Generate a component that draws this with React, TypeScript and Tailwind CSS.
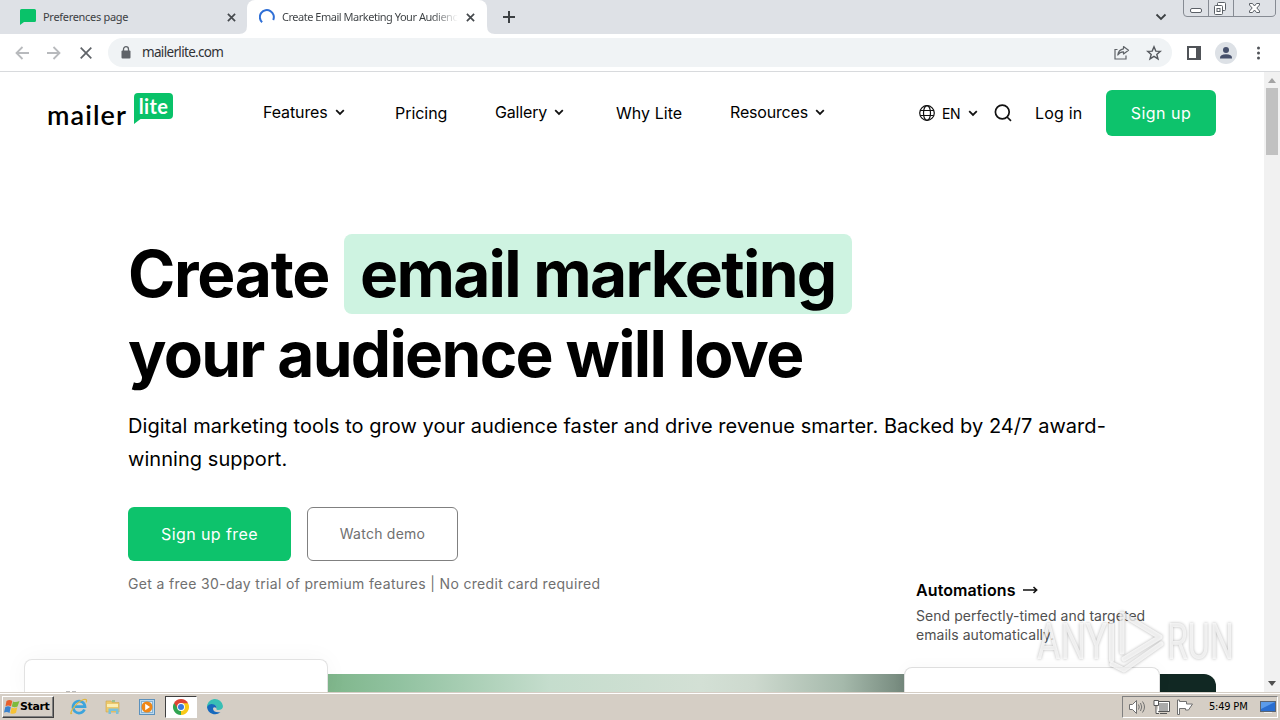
import type { ReactNode } from "react";

const navItems = [
   { label: "Features", menu: true, box: "w-[132px]", text: "tracking-[-0.12px]" },
   { label: "Pricing", menu: false, box: "w-[100px]", text: "tracking-[-0.05px]" },
   { label: "Gallery", menu: true, box: "w-[121px]", text: "tracking-[-0.15px]" },
   { label: "Why Lite", menu: false, box: "w-[114px]", text: "tracking-[0.05px]" },
   { label: "Resources", menu: true, box: "w-[189px]", text: "tracking-[-0.18px]" },
];

function Chevron() {
   return (
      <svg width="10" height="7" viewBox="0 0 10 7" fill="none" stroke="#111" strokeWidth="1.8">
         <path d="M1.2 1.2 5 4.9 8.8 1.2" />
      </svg>
   );
}

function CloseIcon({ size, color }: { size: number; color: string }) {
   return (
      <svg width={size} height={size} viewBox="0 0 10 10" stroke={color} strokeWidth="1.9">
         <path d="M1 1 9 9M9 1 1 9" />
      </svg>
   );
}

function TabStrip() {
   return (
      <div className="relative flex h-[34px] shrink-0 bg-[#dee1e6] text-[#3c4043]">
         <div className="flex w-[247px] items-center pl-5 pr-[11px]">
            <svg width="16" height="16" viewBox="0 0 16 16">
               <path d="M1.5 0H14.5Q16 0 16 1.5V11.5Q16 13 14.5 13H4L0 16V1.5Q0 0 1.5 0Z" fill="#09c269" />
            </svg>
            <span className="ml-[7px] grow whitespace-nowrap font-['Noto_Sans',sans-serif] text-[11px] tracking-[-0.3px]">
               Preferences page
            </span>
            <CloseIcon size={9} color="#45494d" />
         </div>
         <div className="relative flex h-full w-[240px] items-center rounded-t-lg bg-white pl-[12px] pr-[12px]">
            <svg className="absolute -left-2 bottom-0" width="8" height="8" viewBox="0 0 8 8">
               <path d="M8 0V8H0Q8 8 8 0Z" fill="#fff" />
            </svg>
            <svg className="absolute -right-2 bottom-0" width="8" height="8" viewBox="0 0 8 8">
               <path d="M0 0V8H8Q0 8 0 0Z" fill="#fff" />
            </svg>
            <svg width="16" height="16" viewBox="0 0 16 16" fill="none" stroke="#2f6fd6" strokeWidth="2">
               <path d="M3.1 13.2A7 7 0 1 1 14.2 11" />
            </svg>
            <span className="ml-[7px] w-[176px] overflow-hidden whitespace-nowrap bg-gradient-to-r from-[#3c4043] from-85% to-transparent bg-clip-text font-['Noto_Sans',sans-serif] text-[11px] tracking-[-0.48px] text-transparent">
               Create Email Marketing Your Audience
            </span>
            <span className="ml-auto">
               <CloseIcon size={9} color="#45494d" />
            </span>
         </div>
         <svg className="mt-[11px] ml-[16px]" width="12" height="12" viewBox="0 0 12 12" stroke="#3c4043" strokeWidth="2">
            <path d="M6 0V12M0 6H12" />
         </svg>
         <svg className="ml-auto mt-[13px] mr-[16px]" width="12" height="8" viewBox="0 0 12 8" fill="none" stroke="#3c4043" strokeWidth="1.8">
            <path d="M1.5 1.5 6 6 10.5 1.5" />
         </svg>
         <svg width="97" height="18" viewBox="0 0 97 18" fill="none">
            <path d="M.5 0V13Q.5 16.5 4 16.5H88Q92.5 16.5 92.5 13V0M25.5 0V16M50.5 0V16" stroke="#868b93" />
            <g stroke="#5b6067" fill="#fff">
               <rect x="7.500" y="8.500" width="11" height="4" rx="1.500" />
               <rect x="34.500" y="2.500" width="8" height="8" rx="1" />
               <rect x="31.500" y="5.500" width="8" height="9" rx="1" />
               <rect x="34" y="8.500" width="3" height="3" />
               <path d="M66.500 3.500H69.500L71.500 6 73.500 3.500H76.500V5L73.800 8 76.500 11V12.500H73.500L71.500 10 69.500 12.500H66.500V11L69.200 8 66.500 5Z" />
            </g>
         </svg>
      </div>
   );
}

function Toolbar() {
   return (
      <div className="flex h-[38px] shrink-0 items-center border-b border-[#d8dadd] bg-white pl-[15px]">
         <svg width="14" height="14" viewBox="0 0 14 14" fill="none" stroke="#b8babd" strokeWidth="1.8">
            <path d="M14 7H1.500M7.500 1 1.500 7 7.500 13" />
         </svg>
         <svg className="ml-[18px]" width="14" height="14" viewBox="0 0 14 14" fill="none" stroke="#b8babd" strokeWidth="1.8">
            <path d="M0 7H12.500M6.500 1 12.500 7 6.500 13" />
         </svg>
         <svg className="ml-[19px]" width="12" height="12" viewBox="0 0 12 12" stroke="#5f6368" strokeWidth="1.7">
            <path d="M.7.7 11.300 11.300M11.300.7.7 11.300" />
         </svg>
         <div className="ml-[16px] flex h-[29px] w-[1064px] items-center rounded-full bg-[#f0f3f5] pl-[13px] pr-[10px]">
            <svg width="10" height="13" viewBox="0 0 10 13">
               <rect x="0.500" y="4.500" width="9" height="8" rx="1" fill="#5f6368" />
               <path d="M2.500 5V3.200a2.500 2.500 0 0 1 5 0V5" fill="none" stroke="#5f6368" strokeWidth="1.300" />
            </svg>
            <span className="ml-[11px] grow font-['Noto_Sans',sans-serif] text-[13.5px] tracking-[-0.67px] text-[#303236]">
               mailerlite.com
            </span>
            <svg width="16" height="15" viewBox="0 0 16 15" fill="none" stroke="#5f6368" strokeWidth="1.2">
               <path d="M3.500 4.500H1V14H12V10.500" />
               <path d="M9.500 1.500 14.500 5.300 9.500 9V6.800Q6 6.600 3.800 10 4.500 4.600 9.500 3.800Z" strokeLinejoin="round" />
            </svg>
            <svg className="ml-4" width="16" height="16" viewBox="0 0 16 16" fill="none" stroke="#55595e" strokeWidth="1.4">
               <path d="M8 1.800 9.800 6.100 14.300 6.400 10.800 9.400 12 13.900 8 11.400 4 13.900 5.200 9.400 1.700 6.400 6.200 6.100Z" />
            </svg>
         </div>
         <svg className="ml-[15px]" width="14" height="14" viewBox="0 0 14 14">
            <rect x="1" y="1" width="12" height="12" fill="none" stroke="#505358" strokeWidth="2" />
            <rect x="9" y="1" width="5" height="12" fill="#505358" />
         </svg>
         <svg className="ml-[14px]" width="22" height="22" viewBox="0 0 22 22">
            <circle cx="11" cy="11" r="11" fill="#dde1e6" />
            <circle cx="11" cy="8" r="3" fill="#46506b" />
            <path d="M5 16Q5 12.300 11 12.300T17 16V16.500H5Z" fill="#46506b" />
         </svg>
         <svg className="ml-[19px]" width="4" height="14" viewBox="0 0 4 14" fill="#505358">
            <circle cx="2.500" cy="2" r="1.500" />
            <circle cx="2.500" cy="7" r="1.500" />
            <circle cx="2.500" cy="12" r="1.500" />
         </svg>
      </div>
   );
}

function Logo() {
   return (
      <div className="-mt-[2px] flex w-[215px] items-start text-black">
         <span className="-ml-px mt-[5px] w-[87px] font-['Lato',sans-serif] text-[27px] font-semibold leading-[34px] tracking-[1.1px]">
            mailer
         </span>
         <div className="relative h-[32px] w-[39px]">
            <svg className="absolute inset-0" width="39" height="32" viewBox="0 0 39 32">
               <path d="M4 0H35Q39 0 39 4V22Q39 26 35 26H6.500L0 31V4Q0 0 4 0Z" fill="#09c269" />
            </svg>
            <span className="relative block text-center font-['Lato',sans-serif] text-[20px] font-bold leading-[27px] tracking-[0.4px] text-white">
               lite
            </span>
         </div>
      </div>
   );
}

function Header() {
   return (
      <header className="flex h-[82px] shrink-0 items-center px-12 text-[16px] text-black">
         <Logo />
         {navItems.map((item) => (
            <div
               key={item.label}
               className={"flex items-center gap-[7px] whitespace-nowrap " + item.box + (item.menu ? " pb-[2px]" : "")}>
               <span className={item.text}>{item.label}</span>
               {item.menu && <Chevron />}
            </div>
         ))}
         <div className="flex w-[75px] items-center">
            <svg width="16" height="16" viewBox="0 0 16 16" fill="none" stroke="#111" strokeWidth="1.2">
               <circle cx="8" cy="8" r="7.300" />
               <ellipse cx="8" cy="8" rx="3.500" ry="7.300" />
               <path d="M1.300 5.500H14.700M1.300 10.500H14.700" />
            </svg>
            <span className="ml-[7px] mr-[8px] text-[14px] tracking-[-0.4px]">EN</span>
            <Chevron />
         </div>
         <svg className="mr-[23px]" width="18" height="18" viewBox="0 0 18 18" fill="none" stroke="#111" strokeWidth="1.700">
            <circle cx="8.300" cy="8" r="6.900" />
            <path d="M13 13 17 16.800" />
         </svg>
         <span className="w-[71px] tracking-[0.2px]">Log in</span>
         <button className="h-[46px] w-[110px] rounded-[6px] bg-[#0dc36c] tracking-[0.5px] text-white">Sign up</button>
      </header>
   );
}

function Hero() {
   return (
      <section className="h-[520px] pl-[128px] pt-[80px] text-black">
         <h1 className="text-[64px] font-bold leading-[80px] tracking-[-1.7px]">
            <span className="flex">
               <span className="w-[216px] tracking-[-1.28px]">Create</span>
               <span className="w-[508px] whitespace-nowrap rounded-[8px] bg-[#cef3e1] pl-4">email marketing</span>
            </span>
            your audience will love
         </h1>
         <p className="mt-[16px] w-[1010px] text-[20px] leading-[33px] tracking-[0.05px]">
            Digital marketing tools to grow your audience faster and drive revenue smarter. Backed by 24/7 award-
            <br />
            winning support.
         </p>
         <div className="mt-[31px] flex gap-4">
            <button className="h-[54px] w-[163px] rounded-[6px] bg-[#0dc36c] text-[16px] tracking-[0.4px] text-white">Sign up free</button>
            <button className="h-[54px] w-[151px] rounded-[6px] border border-[#808080] pb-[2px] text-[14px] tracking-[0.25px] text-[#707070]">
               Watch demo
            </button>
         </div>
         <p className="mt-[13px] text-[14px] leading-5 tracking-[0.33px] text-[#707070]">
            Get a free 30-day trial of premium features | No credit card required
         </p>
      </section>
   );
}

function Preview() {
   return (
      <div className="relative">
         <div className="absolute left-[328px] top-0 h-[20px] w-[888px] rounded-tr-[12px] bg-[linear-gradient(90deg,#7fb68b_0%,#91c2a0_8%,#c5ddcd_25%,#d3e0d5_42%,#cdd9ce_48%,#a5b9ab_58%,#73877b_65%,#112823_85%,#112823_100%)]" />
         <div className="absolute -top-[15px] left-[24px] h-[36px] w-[304px] rounded-t-[8px] border border-b-0 border-[#e2e2e2] bg-white shadow-[0_0_24px_rgba(0,0,0,0.04)]">
            <span className="absolute left-[41px] top-[31px] h-px w-[4px] bg-[#bbb]" />
            <span className="absolute left-[47px] top-[31px] h-px w-[4px] bg-[#bbb]" />
         </div>
         <div className="absolute -top-[7px] left-[904px] h-[28px] w-[256px] rounded-t-[8px] border border-b-0 border-[#dedede] bg-white shadow-[0_0_16px_rgba(0,0,0,0.03)]" />
         <div className="absolute -top-[94px] left-[916px] w-[260px]">
            <h2 className="flex items-center gap-[7px] text-[16px] font-semibold leading-5 tracking-[0.1px] text-black">
               Automations
               <svg width="15" height="10" viewBox="0 0 15 10" fill="none" stroke="#111" strokeWidth="1.500">
                  <path d="M0 5H13.500M10.500 2 13.700 5 10.500 8" />
               </svg>
            </h2>
            <p className="mt-[6px] whitespace-nowrap text-[14px] leading-[19px] tracking-[0.04px] text-[#505050]">
               Send perfectly-timed and targeted
               <br />
               emails automatically.
            </p>
         </div>
      </div>
   );
}

function Watermark() {
   return (
      <svg className="absolute left-[1030px] top-[600px]" width="225" height="86" viewBox="0 0 225 86">
         <g fill="#fff" fillOpacity="0.7" className="[filter:drop-shadow(0_0_1.5px_rgba(0,0,0,0.4))]">
            <text x="7" y="59" fontSize="50" textLength="70" lengthAdjust="spacingAndGlyphs" className="font-['Roboto',sans-serif]">
               ANY
            </text>
            <text x="137" y="59" fontSize="50" textLength="67" lengthAdjust="spacingAndGlyphs" className="font-['Roboto',sans-serif]">
               RUN
            </text>
            <g fill="none" stroke="#fff" strokeOpacity="0.75" strokeWidth="5" strokeLinejoin="round" strokeLinecap="round">
               <path d="M81.500 24V60" />
               <path d="M92 52V14L130 37 94 59" />
               <path d="M82 64 94 70 131 44" />
            </g>
         </g>
      </svg>
   );
}

function Scrollbar() {
   return (
      <div className="flex w-4 shrink-0 flex-col items-center bg-[#f1f1f1]">
         <div className="mt-[6px] border-x-4 border-b-[5px] border-x-transparent border-b-[#a3a3a3]" />
         <div className="mt-[5px] h-[67px] w-3 bg-[#c1c1c1]" />
         <div className="mb-[6px] mt-auto border-x-4 border-t-[5px] border-x-transparent border-t-[#505050]" />
      </div>
   );
}

function TaskIcon({ active, children }: { active?: boolean; children: ReactNode }) {
   return (
      <div
         className={
            "flex h-[22px] w-[32px] items-center justify-center " +
            (active ? "border border-b-white border-l-[#404040] border-r-white border-t-[#404040] bg-white" : "")
         }>
         <svg width="18" height="18" viewBox="0 0 18 18">
            {children}
         </svg>
      </div>
   );
}

function Taskbar() {
   return (
      <div className="flex h-[28px] shrink-0 items-center border-t border-[#d5cec5] bg-[#d5cec5] pt-px shadow-[inset_0_1px_0_#fff]">
         <div className="ml-[2px] flex h-[22px] w-[52px] items-center border border-b-[#404040] border-l-white border-r-[#404040] border-t-white pl-px shadow-[inset_-1px_-1px_0_#808080]">
            <svg width="16" height="16" viewBox="0 0 16 16">
               <path d="M2.500 2Q5.500 0 8.300 2L7 7.500Q4.500 5.800 1.500 7.200Z" fill="#e8602c" />
               <path d="M9 2.500Q11.500 3.900 15.500 2L13.500 7.500Q11 9 7.800 7.600Z" fill="#7dba3c" />
               <path d="M1.300 8Q4.500 6.600 6.800 8.300L5.500 14Q3 12.200 0 13.500Z" fill="#3b83ce" />
               <path d="M7.600 8.500Q10.500 10 13.300 8.300L12 13.800Q9.500 15.500 6.300 14.200Z" fill="#f6c235" />
            </svg>
            <span className="pt-px font-['DejaVu_Sans',sans-serif] text-[11px] font-bold tracking-[-0.4px] text-black">Start</span>
         </div>
         <div className="ml-[9px] flex grow items-center gap-[2px]">
            <TaskIcon>
               <path d="M14.500 11.500A6 6 0 1 1 15 8.600H5" fill="none" stroke="#3ca4dc" strokeWidth="2.700" />
               <path d="M2 15Q-.5 17 2 12 7 4 13.500 1.500 18 .5 16 4.500" fill="none" stroke="#dfb740" strokeWidth="1.200" />
            </TaskIcon>
            <TaskIcon>
               <path d="M2 3H7L8 4.500H15V14H2Z" fill="#edc96b" stroke="#cfa64a" strokeWidth=".6" />
               <path d="M3 6H14V9H3Z" fill="#fbeeb3" />
               <path d="M4.500 16V10.500H14.500V16H12V13H7V16Z" fill="#7bc1dc" />
               <path d="M8 3H11" stroke="#62b758" />
            </TaskIcon>
            <TaskIcon>
               <rect x="1.500" y="1.500" width="15" height="15" fill="#bcd9ee" stroke="#5b91bd" />
               <rect x="3.500" y="3.500" width="11" height="11" fill="#dcecf7" stroke="#85b2d3" />
               <circle cx="9" cy="9" r="5.500" fill="#ef8717" />
               <path d="M7.200 5.800 12 9 7.200 12.200Z" fill="#fff" />
            </TaskIcon>
            <TaskIcon active>
               <path d="M9 9 2.070 5A8 8 0 0 1 15.930 5Z" fill="#df4434" />
               <path d="M9 9 15.930 5A8 8 0 0 1 9 17Z" fill="#f9c916" />
               <path d="M9 9 9 17A8 8 0 0 1 2.070 5Z" fill="#31a451" />
               <path d="M9 5H15.930L12.500 11 9 9Z" fill="#f9c916" />
               <path d="M2.070 5H15.930V5.300H9L6 11Z" fill="#df4434" />
               <circle cx="9" cy="9" r="3.900" fill="#fff" />
               <circle cx="9" cy="9" r="3" fill="#3979de" />
            </TaskIcon>
            <TaskIcon>
               <path d="M1 10A8 8 0 0 1 17 8Q17 12 12 12 9.500 11.500 10.500 10 11 7 7.500 7 2.500 7 1 10Z" fill="#39bfb5" />
               <path d="M1 9Q3 5 8 6.500 11 7.800 10.500 10 7 8 7 11 8 15 14.500 14A8 8 0 0 1 1 9Z" fill="#1769bd" />
            </TaskIcon>
         </div>
         <div className="mr-[2px] flex h-[22px] w-[156px] items-center border border-b-white border-l-[#808080] border-r-white border-t-[#808080] pl-[6px]">
            <svg width="17" height="16" viewBox="0 0 17 16" fill="none" stroke="#707070">
               <path d="M.5 5.500H3.500L7.500 1.500V14.500L3.500 10.500H.5Z" fill="#fff" />
               <path d="M9.500 5.500Q11 8 9.500 10.500M11.500 4Q14 8 11.500 12M13.500 2.500Q17.500 8 13.500 13.500" />
            </svg>
            <svg className="ml-[7px]" width="17" height="16" viewBox="0 0 17 16" stroke="#555">
               <rect x="5.500" y="3.500" width="10" height="9" fill="#aaa" stroke="#fff" />
               <path d="M5 2.500H16.500V12.500H5M7 14.500H14" fill="none" />
               <path d="M1 1.500H5.500V6.500H1ZM3 6.500V14.500H6" fill="#fff" />
            </svg>
            <svg className="ml-[7px]" width="17" height="16" viewBox="0 0 17 16" fill="#fff" stroke="#707070">
               <path d="M.5 1V15.500H2.500V9.500H8.500V11H11.500L15.500 5H9.500V2.500H2.500V1Z" />
            </svg>
            <span className="ml-[15px] whitespace-nowrap font-['DejaVu_Sans_Condensed','DejaVu_Sans',sans-serif] text-[11px] tracking-[-0.2px] text-black">
               5:49 PM
            </span>
            <svg className="ml-auto mr-px" width="16" height="14" viewBox="0 0 16 14">
               <rect x=".5" y="1.500" width="15" height="10" fill="#2a6ed0" stroke="#5a6472" />
               <path d="M1 2H15L1 9Z" fill="#5b9bea" />
               <path d="M4 12.500H12" stroke="#eee" />
            </svg>
         </div>
      </div>
   );
}

function App() {
   return (
      <div className="relative flex h-[720px] w-[1280px] flex-col overflow-hidden bg-white font-['Inter',sans-serif]">
         <TabStrip />
         <Toolbar />
         <div className="flex h-[620px] shrink-0">
            <main className="flex w-[1264px] flex-col overflow-hidden">
               <Header />
               <Hero />
               <Preview />
            </main>
            <Scrollbar />
         </div>
         <Taskbar />
         <Watermark />
      </div>
   );
}

export default App;
